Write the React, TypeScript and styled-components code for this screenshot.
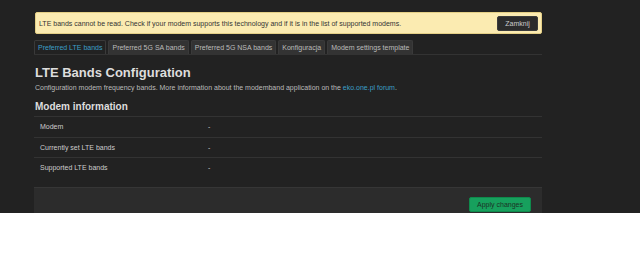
import { FC } from 'react'
import styled, { createGlobalStyle } from 'styled-components'

const GlobalStyle = createGlobalStyle`
  body {
    margin: 0;
    background: #ffffff;
    font-family: "Liberation Sans", Arial, sans-serif;
  }
`

const StyledPage = styled.div`
  background: #222222;
  padding-top: 12px;
`

const Main = styled.div`
  width: 508px;
  margin-left: 34px;
  display: flex;
  flex-direction: column;
`

const Alert = styled.div`
  margin-left: 1px;
  height: 22px;
  box-sizing: border-box;
  display: flex;
  align-items: center;
  justify-content: space-between;
  padding: 0 3px 0 3px;
  background: #fbebb1;
  border: 1px solid #e4cf86;
  border-radius: 2px;
  color: #333333;
  font-size: 7px;
`

const CloseButton = styled.button`
  width: 41px;
  height: 15px;
  padding: 0;
  background: #2b2b2b;
  border: 1px solid #3c3c3c;
  border-radius: 2px;
  color: #cccccc;
  font-family: inherit;
  font-size: 7px;
`

const Tabs = styled.div`
  margin-top: 6px;
  display: flex;
  gap: 2px;
  border-bottom: 1px solid #333333;
`

const Tab = styled.div<{ $active?: boolean }>`
  height: 13px;
  line-height: 13px;
  padding: 0 3px;
  font-size: 7px;
  border: 1px solid #3a3a3a;
  border-bottom: none;
  border-radius: 2px 2px 0 0;
  background: ${({ $active }) => ($active ? '#222222' : '#333333')};
  color: ${({ $active }) => ($active ? '#3c9fc6' : '#bbbbbb')};
`

const Title = styled.h1`
  margin: 10px 0 0 1px;
  font-size: 13px;
  font-weight: bold;
  color: #dddddd;
`

const Description = styled.p`
  margin: 4px 0 0 1px;
  font-size: 7px;
  color: #bbbbbb;
`

const Link = styled.a`
  color: #3c9fc6;
  text-decoration: none;
`

const SectionTitle = styled.h2`
  margin: 10px 0 0 1px;
  font-size: 10px;
  font-weight: bold;
  color: #dddddd;
`

const Table = styled.div`
  margin-top: 4px;
`

const Row = styled.div`
  display: grid;
  grid-template-columns: 168px 1fr;
  height: 20.5px;
  align-items: center;
  border-top: 1px solid #333333;
  box-sizing: border-box;
`

const Cell = styled.div`
  padding-left: 6px;
  font-size: 7px;
  color: #cccccc;
`

const Footer = styled.div`
  margin-top: 9px;
  height: 26px;
  box-sizing: border-box;
  background: #2c2c2c;
  border-top: 1px solid #363636;
  display: flex;
  justify-content: flex-end;
  align-items: flex-start;
  padding: 9px 11px 0 0;
`

const ApplyButton = styled.button`
  width: 62px;
  height: 15px;
  padding: 0;
  background: #17a05d;
  border: 1px solid #0f8a4c;
  border-radius: 2px;
  color: #1c3326;
  font-family: inherit;
  font-size: 7px;
`

const rows = [
  { label: 'Modem', value: '-' },
  { label: 'Currently set LTE bands', value: '-' },
  { label: 'Supported LTE bands', value: '-' }
]

const tabs = [
  'Preferred LTE bands',
  'Preferred 5G SA bands',
  'Preferred 5G NSA bands',
  'Konfiguracja',
  'Modem settings template'
]

const App: FC = () => {
  return (
    <StyledPage>
      <GlobalStyle />
      <Main>
        <Alert>
          <span>
            LTE bands cannot be read. Check if your modem supports this technology and if it is in
            the list of supported modems.
          </span>
          <CloseButton>Zamknij</CloseButton>
        </Alert>
        <Tabs>
          {tabs.map((tab, i) => (
            <Tab key={tab} $active={i === 0}>
              {tab}
            </Tab>
          ))}
        </Tabs>
        <Title>LTE Bands Configuration</Title>
        <Description>
          Configuration modem frequency bands. More information about the modemband application on
          the <Link href="#">eko.one.pl forum</Link>.
        </Description>
        <SectionTitle>Modem information</SectionTitle>
        <Table>
          {rows.map((row) => (
            <Row key={row.label}>
              <Cell>{row.label}</Cell>
              <Cell>{row.value}</Cell>
            </Row>
          ))}
        </Table>
        <Footer>
          <ApplyButton>Apply changes</ApplyButton>
        </Footer>
      </Main>
    </StyledPage>
  )
}

export default App
